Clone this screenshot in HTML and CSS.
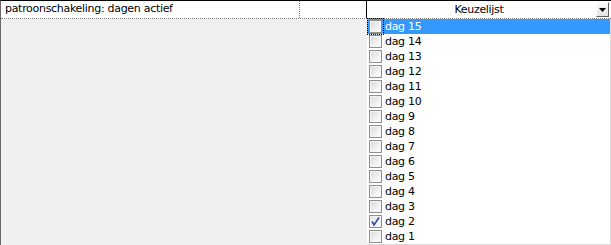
FILE: index.html
```html
<!DOCTYPE html>
<html lang="nl">
  <head>
    <meta charset="UTF-8" />
    <title>Patroonschakeling</title>
    <link rel="stylesheet" href="styles.css">
  </head>
  <body>
    <div class="panel">
      <div class="row">
        <div class="cell label">patroonschakeling: dagen actief</div>
        <div class="cell spare"></div>
        <div class="combo">
          <span class="combo-text">Keuzelijst</span>
          <span class="combo-btn">
            <svg width="7" height="4" viewBox="0 0 7 4"><path d="M0 0h7L3.5 4z" fill="#000"/></svg>
          </span>
        </div>
      </div>
      <div class="rest"></div>

      <ul class="dropdown">
        <li class="item selected"><span class="check focus"></span><span>dag 15</span></li>
        <li class="item"><span class="check"></span><span>dag 14</span></li>
        <li class="item"><span class="check"></span><span>dag 13</span></li>
        <li class="item"><span class="check"></span><span>dag 12</span></li>
        <li class="item"><span class="check"></span><span>dag 11</span></li>
        <li class="item"><span class="check"></span><span>dag 10</span></li>
        <li class="item"><span class="check"></span><span>dag 9</span></li>
        <li class="item"><span class="check"></span><span>dag 8</span></li>
        <li class="item"><span class="check"></span><span>dag 7</span></li>
        <li class="item"><span class="check"></span><span>dag 6</span></li>
        <li class="item"><span class="check"></span><span>dag 5</span></li>
        <li class="item"><span class="check"></span><span>dag 4</span></li>
        <li class="item"><span class="check"></span><span>dag 3</span></li>
        <li class="item"><span class="check checked">
          <svg width="11" height="11" viewBox="0 0 11 11"><path d="M2 5.5l2 3.5L9 1.5" fill="none" stroke="#2a4f9c" stroke-width="1.6"/></svg>
        </span><span>dag 2</span></li>
        <li class="item"><span class="check"></span><span>dag 1</span></li>
      </ul>
    </div>
  </body>
</html>
```

FILE: styles.css
```css
* {
  box-sizing: border-box;
}

body {
  margin: 0;
  font-family: "DejaVu Sans", Verdana, sans-serif;
  font-size: 11px;
  letter-spacing: -0.3px;
  color: #000;
  background: #f0f0f0;
}

.panel {
  position: relative;
  width: 611px;
  height: 245px;
  border-left: 1px solid #696969;
  border-top: 1px solid #000;
  display: flex;
  flex-direction: column;
}

.row {
  display: flex;
  height: 18px;
  background: #fff;
  border-bottom: 1px dotted #808080;
}

.cell {
  height: 100%;
}

.label {
  width: 299px;
  padding: 1px 0 0 4px;
  border-right: 1px dotted #808080;
}

.spare {
  width: 66px;
}

.combo {
  flex: 1;
  position: relative;
  display: flex;
  align-items: center;
  justify-content: center;
  border-left: 1px solid #000;
  background: #fff;
}

.combo-text {
  padding-right: 20px;
}

.combo-btn {
  position: absolute;
  right: 2px;
  top: 1px;
  width: 13px;
  height: 15px;
  display: flex;
  align-items: center;
  justify-content: center;
  background: linear-gradient(#fafafa, #e4e4e4);
  border: 1px solid;
  border-color: #fff #606060 #606060 #fff;
}

.rest {
  flex: 1;
}

.dropdown {
  position: absolute;
  left: 366px;
  top: 18px;
  width: 244px;
  margin: 0;
  padding: 0;
  list-style: none;
  background: #fff;
  border-right: 1px solid #dcdcdc;
  border-bottom: 1px solid #dcdcdc;
}

.item {
  display: flex;
  align-items: center;
  gap: 3px;
  height: 15px;
  padding-left: 2px;
}

.item.selected {
  background: #3399ff;
  color: #fff;
  outline: 1px dotted #e07020;
  outline-offset: -1px;
}

.check {
  width: 13px;
  height: 13px;
  flex: none;
  border: 1px solid #8e8f8f;
  background: linear-gradient(135deg, #d8d8d8, #f6f6f6 70%, #fff);
  box-shadow: inset 0 0 0 1px #f4f4f4;
  display: flex;
  align-items: center;
  justify-content: center;
}

.check.focus {
  outline: 1px dotted #000;
  outline-offset: 1px;
}

.check.checked {
  background: linear-gradient(135deg, #e4e4e4, #fbfbfb);
}
```
